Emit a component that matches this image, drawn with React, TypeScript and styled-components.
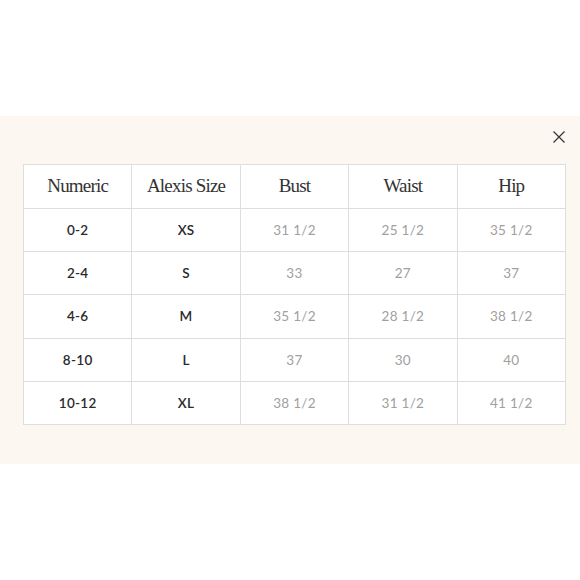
import React from "react";
import styled, { createGlobalStyle } from "styled-components";

const GlobalStyle = createGlobalStyle`
  html, body {
    margin: 0;
    padding: 0;
    background: #ffffff;
  }
`;

const Page = styled.div`
  width: 580px;
  height: 580px;
  padding-top: 116px;
  box-sizing: border-box;
`;

const Panel = styled.div`
  position: relative;
  height: 348px;
  background: #fcf7f0;
  padding: 48px 14px 0 23px;
  box-sizing: border-box;
`;

const Close = styled.button`
  position: absolute;
  top: 14px;
  right: 14px;
  width: 14px;
  height: 14px;
  padding: 0;
  border: none;
  background: none;
  display: flex;
  align-items: center;
  justify-content: center;
`;

const Table = styled.table`
  width: 543px;
  border-collapse: collapse;
  background: #ffffff;
  table-layout: fixed;
`;

const Head = styled.th`
  height: 41px;
  border: 1px solid #dedede;
  font-family: "Liberation Serif", "DejaVu Serif", serif;
  font-weight: 400;
  font-size: 19px;
  letter-spacing: -0.8px;
  color: #333333;
  text-align: center;
  padding: 0 0 2px;
`;

const Cell = styled.td<{ $strong?: boolean }>`
  height: 42.2px;
  border: 1px solid #dedede;
  font-family: Lato, "Noto Sans", sans-serif;
  font-size: 13.5px;
  font-weight: ${(p) => (p.$strong ? 600 : 400)};
  color: ${(p) => (p.$strong ? "#2a2a2a" : "#a0a0a0")};
  letter-spacing: 0.3px;
  text-align: center;
  padding: 0;
`;

const headers = ["Numeric", "Alexis Size", "Bust", "Waist", "Hip"];

const rows = [
  ["0-2", "XS", "31 1/2", "25 1/2", "35 1/2"],
  ["2-4", "S", "33", "27", "37"],
  ["4-6", "M", "35 1/2", "28 1/2", "38 1/2"],
  ["8-10", "L", "37", "30", "40"],
  ["10-12", "XL", "38 1/2", "31 1/2", "41 1/2"],
];

export default function App() {
  return (
    <Page>
      <GlobalStyle />
      <Panel>
        <Close aria-label="Close">
          <svg width="12" height="12" viewBox="0 0 12 12">
            <path d="M0.5 0.5 L11.5 11.5 M11.5 0.5 L0.5 11.5" stroke="#333" strokeWidth="1.2" />
          </svg>
        </Close>
        <Table>
          <thead>
            <tr>
              {headers.map((h) => (
                <Head key={h}>{h}</Head>
              ))}
            </tr>
          </thead>
          <tbody>
            {rows.map((r) => (
              <tr key={r[0]}>
                {r.map((v, i) => (
                  <Cell key={i} $strong={i < 2}>
                    {v}
                  </Cell>
                ))}
              </tr>
            ))}
          </tbody>
        </Table>
      </Panel>
    </Page>
  );
}
